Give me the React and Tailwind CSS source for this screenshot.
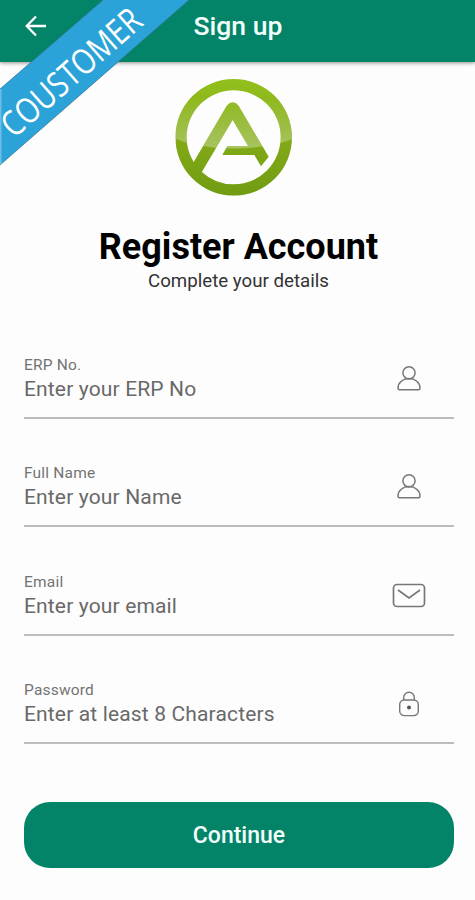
import React from 'react';

const UserIcon = () => (
  <svg width="26" height="28" viewBox="0 0 26 28" fill="none" stroke="#777777" strokeWidth="1.5">
    <circle cx="13" cy="7.8" r="6.1" />
    <path d="M2 23.2C2 17.5 7 13.6 13 13.6S24 17.5 24 23.2Q24 24.7 22.5 24.7H3.5Q2 24.7 2 23.2Z" />
  </svg>
);

const MailIcon = () => (
  <svg width="34" height="26" viewBox="0 0 34 26" fill="none" stroke="#777777" strokeWidth="1.7">
    <rect x="1.5" y="1.5" width="31" height="22" rx="3.5" />
    <path d="M6 7L17 15L28 7" />
  </svg>
);

const LockIcon = () => (
  <svg width="22" height="28" viewBox="0 0 22 28" fill="none" stroke="#777777" strokeWidth="1.4">
    <path d="M5.7 10V7.6a5.3 5.3 0 0 1 10.6 0V10" />
    <rect x="1.7" y="10" width="18.6" height="15.6" rx="4.5" />
    <circle cx="11" cy="17.6" r="2" fill="#555555" stroke="none" />
  </svg>
);

const Logo = () => (
  <svg className="shrink-0" width="150" height="135" viewBox="0 0 450 405">
    <defs>
      <linearGradient id="leaf" x1="0" y1="27" x2="0" y2="378" gradientUnits="userSpaceOnUse">
        <stop offset="0" stopColor="#93c01d" />
        <stop offset="0.5" stopColor="#83ab18" />
        <stop offset="1" stopColor="#719b12" />
      </linearGradient>
      <linearGradient id="shine" x1="0" y1="80" x2="0" y2="235" gradientUnits="userSpaceOnUse">
        <stop offset="0" stopColor="#ffffff" stopOpacity="0" />
        <stop offset="1" stopColor="#ffffff" stopOpacity="0.32" />
      </linearGradient>
      <clipPath id="mark">
        <path
          clipRule="evenodd"
          d="M221 27a175 175 0 1 1 0 350a175 175 0 1 1 0-350ZM221 61a141 141 0 1 0 0 282a141 141 0 1 0 0-282Z"
        />
        <path d="M97 283L200 107Q218 87 236 107L326 260L303 289L283 255H187L202 228H264L218 150L123 310Z" />
      </clipPath>
    </defs>
    <g clipPath="url(#mark)">
      <rect width="450" height="405" fill="url(#leaf)" />
      <path d="M0 60H450V185Q395 211 345 223Q221 248 97 223Q55 212 0 185Z" fill="url(#shine)" />
    </g>
  </svg>
);

const Ribbon = () => (
  <svg className="absolute left-0 top-0 overflow-visible" width="190" height="166" viewBox="0 0 190 166">
    <path d="M103 0H189L0 165V89Z" fill="#2ba3d8" />
    <path d="M103 0L0 89M189 0L0 165" stroke="#36718f" strokeWidth="0.7" />
    <path d="M0.8 89V164" stroke="#69bde5" strokeWidth="1.6" />
    <text
      transform="translate(14 139) rotate(-41.3)"
      textLength="174"
      lengthAdjust="spacingAndGlyphs"
      className="fill-white font-['Open_Sans',sans-serif] text-[35px]"
    >
      COUSTOMER
    </text>
  </svg>
);

const fields = [
  { label: 'ERP No.', hint: 'Enter your ERP No', icon: <UserIcon /> },
  { label: 'Full Name', hint: 'Enter your Name', icon: <UserIcon /> },
  { label: 'Email', hint: 'Enter your email', icon: <MailIcon /> },
  { label: 'Password', hint: 'Enter at least 8 Characters', icon: <LockIcon /> },
];

const Field = ({ field }) => (
  <div className="flex h-[76px] items-start justify-between border-b-2 border-[#bdbdbd]">
    <div className="flex flex-col pt-[12px]">
      <span className="text-[15.5px] leading-[20px] tracking-[0.2px] text-[#737373]">{field.label}</span>
      <span className="mt-[1px] text-[21px] leading-[27px] tracking-[0.15px] text-[#696969]">{field.hint}</span>
    </div>
    <div className="mr-7 flex h-[72px] w-[34px] items-center justify-center">{field.icon}</div>
  </div>
);

const App = () => {
  return (
    <div className="relative flex h-[900px] w-full flex-col overflow-hidden bg-[#fdfdfd] font-[Roboto,sans-serif]">
      <header className="flex h-[62px] shrink-0 items-center bg-[#038468] pb-[11px] shadow-[0_1px_4px_rgba(0,0,0,0.45)]">
        <svg className="ml-6 shrink-0" width="24" height="24" viewBox="0 0 24 24" fill="none" stroke="#fff" strokeWidth="2.3">
          <path d="M22 12H3M12 2.5L2.7 12L12 21.5" />
        </svg>
        <h1 className="w-[380px] pl-[145.5px] text-[26.5px] font-medium leading-8 text-[#f2fffb]">Sign up</h1>
      </header>
      <Ribbon />
      <main className="flex flex-col px-6">
        <div className="mt-2 flex flex-col items-center">
          <div className="mr-[6px]">
            <Logo />
          </div>
          <h2 className="ml-[2px] mt-[21px] text-[36px] font-bold leading-[42px] text-black">Register Account</h2>
          <p className="ml-[2px] mt-[1px] text-[18.7px] leading-[24px] text-[#333333]">Complete your details</p>
        </div>
        <div className="mr-[-3px] mt-[49.5px] flex flex-col gap-[32.5px]">
          {fields.map((field) => (
            <Field key={field.label} field={field} />
          ))}
        </div>
        <button className="mr-[-3px] mt-[57.5px] h-[66px] rounded-[26px] bg-[#038468] pt-[3px] text-[23px] font-medium text-[#f2fffb]">
          Continue
        </button>
      </main>
    </div>
  );
};

export default App;
